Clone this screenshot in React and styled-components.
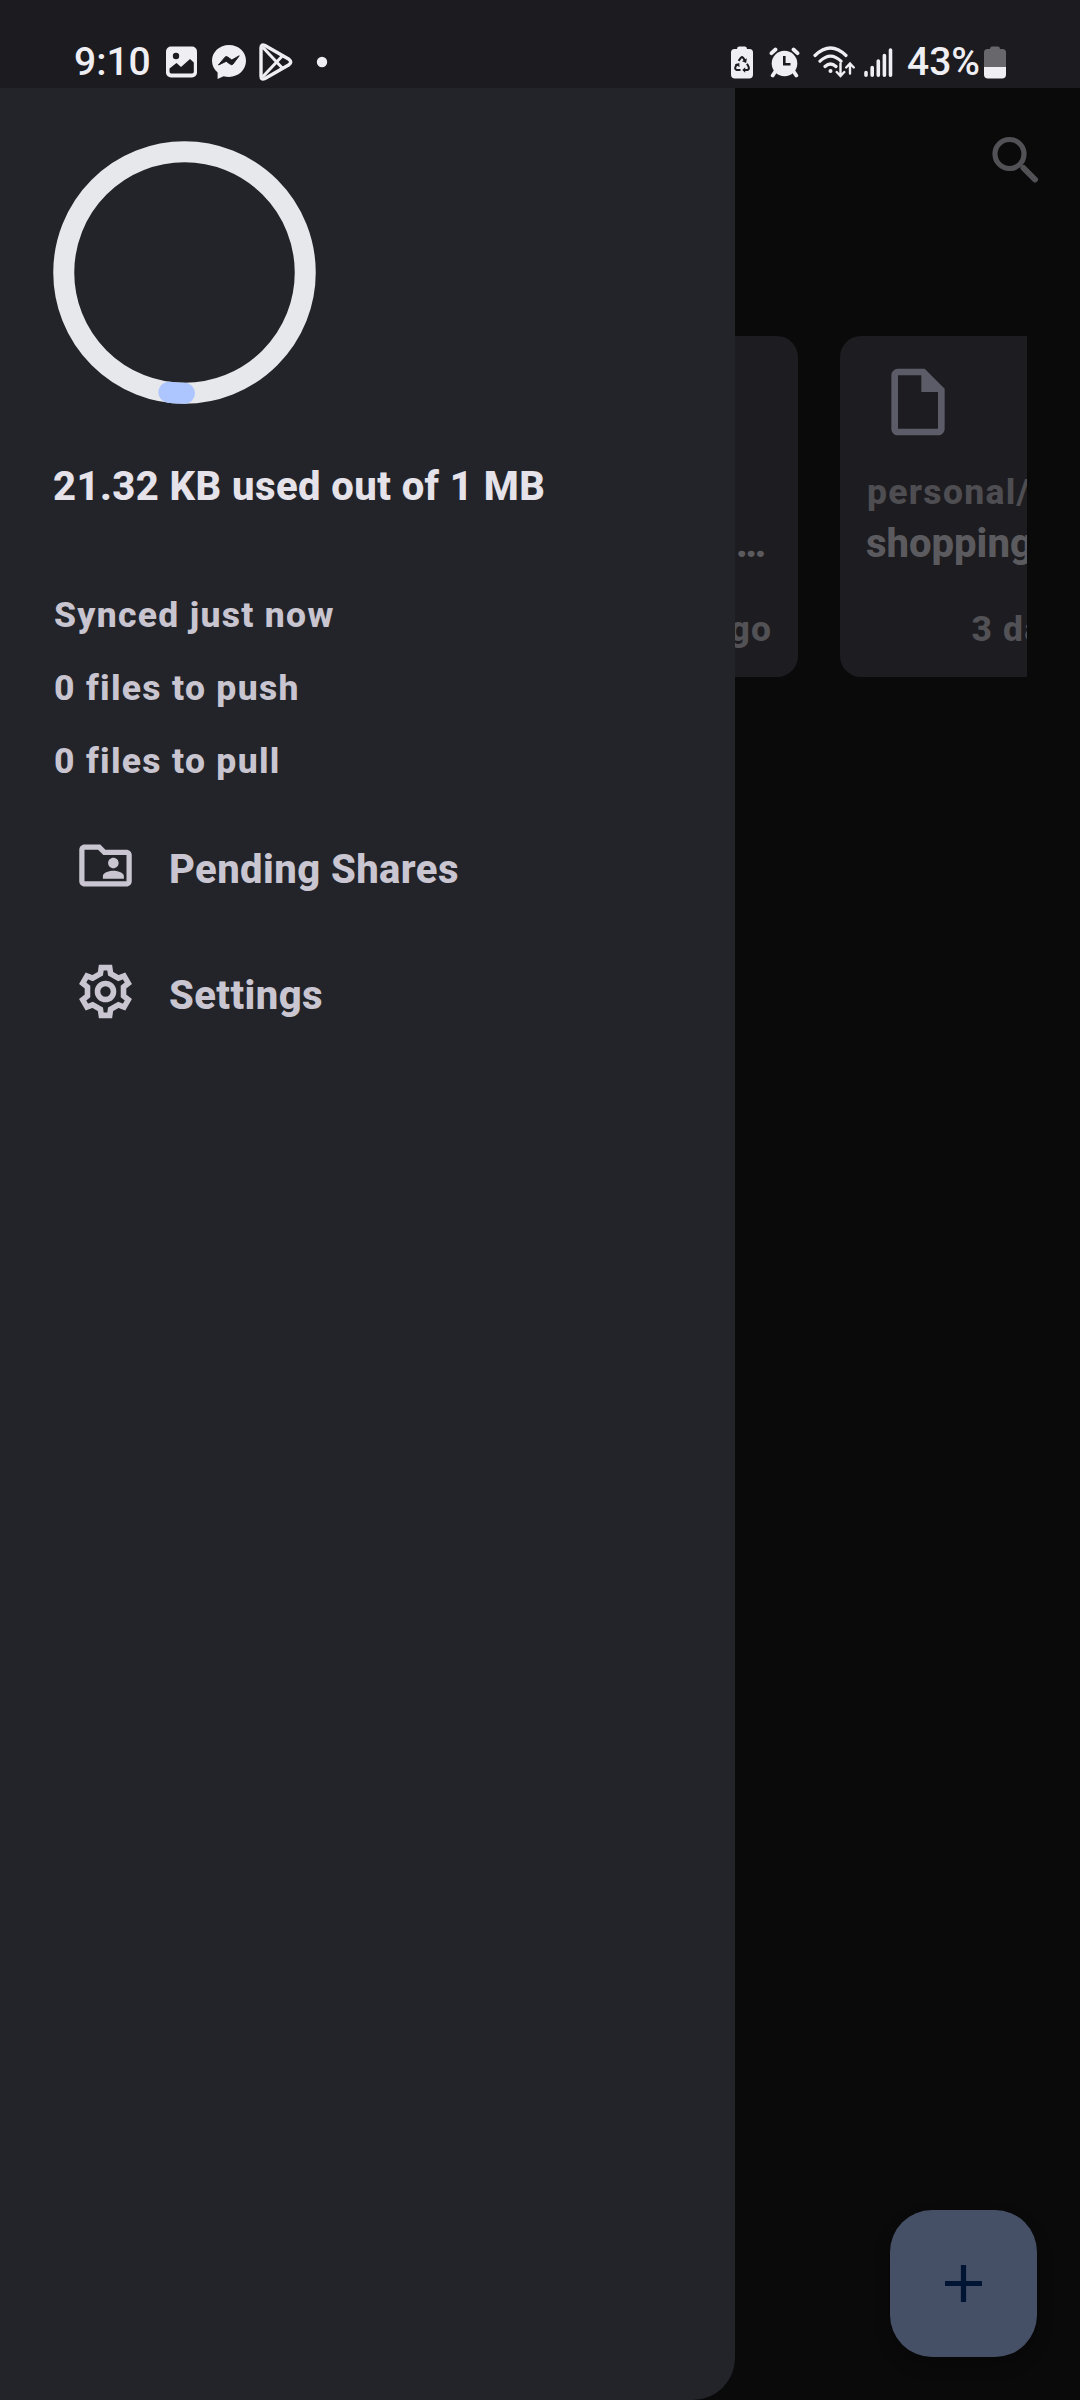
import React from "react";
import styled, { createGlobalStyle } from "styled-components";
import { MdOutlineFolderShared, MdOutlineInsertDriveFile } from "react-icons/md";

const GlobalStyle = createGlobalStyle`
  * { box-sizing: border-box; }
  body { margin: 0; background: #0a0a0a; font-family: Roboto, "Liberation Sans", sans-serif; }
  svg { display: block; flex: none; }
`;

const Screen = styled.div`
  width: 1080px;
  height: 2400px;
  display: flex;
  flex-direction: column;
  overflow: hidden;
  background: #0a0a0a;
`;

const StatusBar = styled.header`
  flex: none;
  height: 88px;
  padding: 36px 74px 0 74px;
  display: flex;
  justify-content: space-between;
  background: #1c1b20;
  color: #efeef3;
`;

const StatusGroup = styled.div`
  height: 52px;
  display: flex;
  align-items: center;
`;

const StatusSlot = styled.div`
  flex: none;
  margin-left: ${(p) => p.$before || 0}px;
`;

const StatusText = styled.div`
  width: 77px;
  font-size: 39px;
  line-height: 52px;
  font-weight: 500;
  white-space: nowrap;
`;

const Body = styled.div`
  flex: 1;
  display: grid;
  grid-template: 100% / 100%;
`;

const Page = styled.main`
  grid-area: 1 / 1;
  display: flex;
  flex-direction: column;
  justify-content: space-between;
  padding-bottom: 43px;
`;

const TopBar = styled.div`
  height: 248px;
  padding: 47px 40px 0 0;
  display: flex;
  justify-content: flex-end;
`;

const CardRow = styled.div`
  margin: 0 53px;
  padding-left: 404px;
  display: flex;
  gap: 42px;
  overflow: hidden;
`;

const Card = styled.article`
  flex: none;
  width: 341px;
  height: 341px;
  padding: 26px 26px 0;
  border-radius: 21px;
  display: flex;
  flex-direction: column;
  background: #1d1c20;
  color: #5b5a5e;
`;

const CardIcon = styled.div`
  height: 80px;
  padding-left: 12px;
  color: #5c5b68;
`;

const CardFolder = styled.div`
  height: 50px;
  margin-top: 25px;
  padding-left: 1px;
  font-size: 35.5px;
  line-height: 50px;
  font-weight: 800;
  letter-spacing: 1.3px;
  color: #4e4d51;
`;

const CardTitle = styled.div`
  height: 54px;
  padding-right: 6px;
  font-size: 40px;
  line-height: 54px;
  font-weight: 800;
  text-align: ${(p) => p.$align || "left"};
`;

const CardAge = styled.div`
  height: 50px;
  margin-top: 33px;
  font-size: 35.5px;
  line-height: 50px;
  font-weight: 800;
  letter-spacing: 1.1px;
  text-align: right;
  color: #525155;
`;

const Fab = styled.button`
  align-self: flex-end;
  width: 147px;
  height: 147px;
  margin-right: 43px;
  padding: 0;
  border: 0;
  border-radius: 42px;
  display: grid;
  place-items: center;
  background: #454f66;
  box-shadow: 0 8px 16px rgba(0, 0, 0, 0.25);
`;

const Drawer = styled.aside`
  grid-area: 1 / 1;
  z-index: 1;
  width: 735px;
  padding: 53px 53px 0;
  border-radius: 0 0 42px 0;
  display: flex;
  flex-direction: column;
  background: #232429;
`;

const Usage = styled.div`
  margin-top: 55px;
  height: 56px;
  font-size: 40px;
  line-height: 56px;
  font-weight: 800;
  letter-spacing: 0.42px;
  white-space: nowrap;
  color: #e5e2e9;
`;

const SyncList = styled.div`
  margin-top: 64px;
  padding-left: 1px;
`;

const SyncLine = styled.div`
  height: 73px;
  font-size: 35.5px;
  line-height: 73px;
  font-weight: 800;
  letter-spacing: 1.3px;
  color: #c8c5d0;
`;

const Menu = styled.nav`
  margin-top: 5px;
  display: flex;
  flex-direction: column;
`;

const MenuItem = styled.a`
  height: 126px;
  padding-left: 21px;
  display: flex;
  align-items: center;
  gap: 32px;
  font-size: 40px;
  font-weight: 800;
  letter-spacing: 0.42px;
  color: #c9c6d1;
`;

const MenuLabel = styled.span`
  padding-top: 7px;
  line-height: 56px;
`;

const Ring = ({ used, total }) => {
  const r = 120.75;
  const c = 2 * Math.PI * r;
  const part = (used / total) * c;
  return (
    <svg width="263" height="263" viewBox="0 0 263 263" fill="none" strokeWidth="21">
      <circle cx="131.5" cy="131.5" r={r} stroke="#e6e8ec" />
      <circle
        cx="131.5"
        cy="131.5"
        r={r}
        stroke="#adc6ff"
        strokeLinecap="round"
        strokeDasharray={`${part} ${c}`}
        transform="rotate(90 131.5 131.5)"
      />
    </svg>
  );
};

const PictureIcon = () => (
  <svg width="31" height="32" viewBox="0 0 31 32">
    <rect y="0.5" width="31" height="31" rx="5" fill="#efeef3" />
    <circle cx="10" cy="10" r="3.2" fill="#1c1b20" />
    <path d="M3.5 22.5 10.5 17l4.5 4 9-8 3.8 3.6v9.2q0 1.7-1.7 1.7H5.2q-1.7 0-1.7-1.7z" fill="#1c1b20" />
  </svg>
);

const MessengerIcon = () => (
  <svg width="34" height="34" viewBox="0 0 34 34">
    <path d="M17 0C7.5 0 0 7 0 15.8c0 4.8 2.1 8.8 5.6 11.6V34l6-2.8c1.7.5 3.5.7 5.4.7 9.5 0 17-7 17-16.1S26.5 0 17 0z" fill="#efeef3" />
    <path d="M6.5 20 13 12.2q1.2-1.2 2.6-.2l4.2 3 7.4-4.2L21 19q-1.2 1.3-2.6.3l-4.2-3z" fill="#1c1b20" stroke="#1c1b20" strokeLinejoin="round" />
  </svg>
);

const PlayIcon = () => (
  <svg width="34" height="38" viewBox="0 0 34 38" fill="none" stroke="#efeef3" strokeLinejoin="round">
    <path d="M2 5q0-4.5 4-2.5L30 16.3q3.5 2.7 0 5.4L6 35.5q-4 2-4-2.500z" strokeWidth="3.4" />
    <path d="M3.5 4 23.5 25.3M3.5 34 23.5 12.7" strokeWidth="3" />
  </svg>
);

const Dot = () => (
  <svg width="12" height="12" viewBox="0 0 12 12">
    <circle cx="6" cy="6" r="5.2" fill="#efeef3" />
  </svg>
);

const SaverIcon = () => (
  <svg width="22" height="33" viewBox="0 0 22 33">
    <path d="M6 3q0-2.5 2-2.5h6q2 0 2 2.5h2.5Q22 3 22 6.5v22q0 4-4 4H4q-4 0-4-4v-22Q0 3 3.5 3z" fill="#efeef3" />
    <g fill="none" stroke="#1c1b20" strokeWidth="2" strokeLinejoin="round">
      <path d="M7.6 14.8 10 11.6q1-1 2 0l2.4 3.5" />
      <path d="m16 17.8 1.7 3.2q.8 2.4-1.5 3H13" />
      <path d="M9.5 24H5.800q-2.3-.6-1.4-3L6 18" />
    </g>
    <path d="m15.8 12.2-.6 4.8-4.2-1.8zM14.2 21.3v5.4L11.3 24zM3.8 18.6l4.5-1.7.2 4z" fill="#1c1b20" />
  </svg>
);

const AlarmIcon = () => (
  <svg width="31" height="31" viewBox="0 0 31 31">
    <circle cx="15.5" cy="16.5" r="12.8" fill="#efeef3" />
    <g stroke="#efeef3" strokeWidth="3.8" strokeLinecap="round">
      <path d="m2.5 6.2 4-3.7M28.5 6.2l-4-3.7M6 25l-2.300 3.5M25 25l2.3 3.5" />
    </g>
    <path d="M15.3 9v8.3h6.2" fill="none" stroke="#1c1b20" strokeWidth="2.6" />
  </svg>
);

const WifiIcon = () => (
  <svg width="42" height="32" viewBox="0 0 42 32" fill="none" stroke="#efeef3" strokeLinecap="round">
    <path d="M2 9.5Q17.5-5.5 33 9.5M7 15.2Q17.5 5 28 15.2M12 20.5Q17.5 15.5 23 20.5" strokeWidth="3.2" />
    <circle cx="17.5" cy="25" r="2" fill="#efeef3" stroke="none" />
    <path d="M27.5 17.5V29.5M23.7 26l3.8 4 3.8-4M37 27.5V18M33.2 21.5 37 17.5l3.8 4" strokeWidth="2.4" />
  </svg>
);

const SignalIcon = () => (
  <svg width="29" height="31" viewBox="0 0 29 31" stroke="#efeef3" strokeWidth="3.6" strokeLinecap="round">
    <path d="M2 25.5v2.7M8.2 20.5v7.7M14.3 14v14.2M20.4 8.5v19.7M26.5 3v25.2" />
  </svg>
);

const BatteryIcon = () => (
  <svg width="22" height="33" viewBox="0 0 22 33">
    <path d="M6 3q0-2.5 2-2.5h6q2 0 2 2.5h2.5Q22 3 22 6.5V21H0V6.5Q0 3 3.5 3z" fill="#68676c" />
    <path d="M0 21h22v7.5q0 4-4 4H4q-4 0-4-4z" fill="#efeef3" />
  </svg>
);

const SearchIcon = () => (
  <svg width="48" height="48" viewBox="0 0 48 48" fill="none" stroke="#525155">
    <circle cx="17.5" cy="19" r="14.5" strokeWidth="5.2" />
    <path d="m31.5 33 11.5 11.5" strokeWidth="6" strokeLinecap="round" />
  </svg>
);

const PlusIcon = () => (
  <svg width="37" height="37" viewBox="0 0 37 37" stroke="#001433" strokeWidth="5.2">
    <path d="M18.5 0v37M0 18.5h37" />
  </svg>
);

const gearOutline = [0, 60, 120, 180, 240, 300]
  .flatMap((deg) => {
    const a = (deg * Math.PI) / 180;
    return [[-5.1, -17.85], [-4.2, -23.9], [4.2, -23.9], [5.1, -17.85]].map(
      ([x, y]) => `${x * Math.cos(a) - y * Math.sin(a)},${x * Math.sin(a) + y * Math.cos(a)}`
    );
  })
  .join(" ");

const GearIcon = () => (
  <svg width="63" height="63" viewBox="-31.5 -31.5 63 63" fill="none" stroke="currentColor" strokeWidth="5.6">
    <polygon points={gearOutline} />
    <circle r="8" />
  </svg>
);

const IconSlot = styled.div`
  padding-bottom: 2px;
`;

export default function App() {
  return (
    <Screen>
      <GlobalStyle />
      <StatusBar>
        <StatusGroup>
          <StatusText>9:10</StatusText>
          <StatusSlot $before={15}><PictureIcon /></StatusSlot>
          <StatusSlot $before={15}><MessengerIcon /></StatusSlot>
          <StatusSlot $before={13}><PlayIcon /></StatusSlot>
          <StatusSlot $before={23}><Dot /></StatusSlot>
        </StatusGroup>
        <StatusGroup>
          <StatusSlot><SaverIcon /></StatusSlot>
          <StatusSlot $before={16}><AlarmIcon /></StatusSlot>
          <StatusSlot $before={13}><WifiIcon /></StatusSlot>
          <StatusSlot $before={9}><SignalIcon /></StatusSlot>
          <StatusSlot $before={14}><StatusText>43%</StatusText></StatusSlot>
          <StatusSlot><BatteryIcon /></StatusSlot>
        </StatusGroup>
      </StatusBar>
      <Body>
        <Page>
          <div>
            <TopBar>
              <SearchIcon />
            </TopBar>
            <CardRow>
              <Card>
                <CardIcon>
                  <MdOutlineInsertDriveFile size={80} />
                </CardIcon>
                <CardFolder />
                <CardTitle $align="right">…</CardTitle>
                <CardAge>ago</CardAge>
              </Card>
              <Card>
                <CardIcon>
                  <MdOutlineInsertDriveFile size={80} />
                </CardIcon>
                <CardFolder>personal/</CardFolder>
                <CardTitle>shopping</CardTitle>
                <CardAge>3 days ago</CardAge>
              </Card>
            </CardRow>
          </div>
          <Fab aria-label="Add">
            <PlusIcon />
          </Fab>
        </Page>
        <Drawer>
          <Ring used={21.32} total={1024} />
          <Usage>21.32 KB used out of 1 MB</Usage>
          <SyncList>
            <SyncLine>Synced just now</SyncLine>
            <SyncLine>0 files to push</SyncLine>
            <SyncLine>0 files to pull</SyncLine>
          </SyncList>
          <Menu>
            <MenuItem>
              <IconSlot><MdOutlineFolderShared size={63} /></IconSlot>
              <MenuLabel>Pending Shares</MenuLabel>
            </MenuItem>
            <MenuItem>
              <IconSlot><GearIcon /></IconSlot>
              <MenuLabel>Settings</MenuLabel>
            </MenuItem>
          </Menu>
        </Drawer>
      </Body>
    </Screen>
  );
}
